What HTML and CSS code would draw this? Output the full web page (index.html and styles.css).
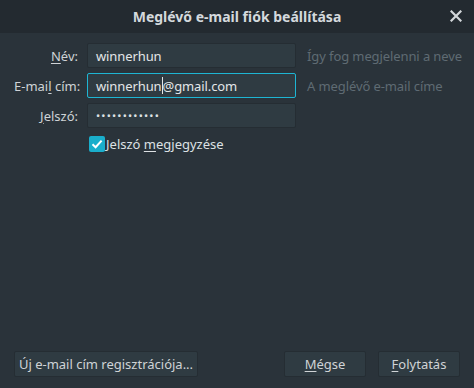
FILE: index.html
```html
<!DOCTYPE html>
<html lang="hu">
<head>
<meta charset="utf-8">
<link rel="stylesheet" href="styles.css">
</head>
<body>
<div class="window">
  <div class="titlebar">
    <div class="title">Meglévő e-mail fiók beállítása</div>
    <div class="close">
      <svg width="12" height="12" viewBox="0 0 12 12"><path d="M1.5 1.5 L10.5 10.5 M10.5 1.5 L1.5 10.5" stroke="#d3d7da" stroke-width="2.2" stroke-linecap="square"/></svg>
    </div>
  </div>
  <div class="content">
    <div class="form">
      <div class="label"><u>N</u>év:</div>
      <div class="field">winnerhun</div>
      <div class="hint">Így fog megjelenni a neve</div>

      <div class="label">E-mai<u>l</u> cím:</div>
      <div class="field focus">winnerhun<span class="caret"></span>@gmail.com</div>
      <div class="hint">A meglévő e-mail címe</div>

      <div class="label"><u>J</u>elszó:</div>
      <div class="field pwd">••••••••••••</div>
      <div class="hint"></div>

      <div></div>
      <div class="check-row">
        <span class="checkbox">
          <svg width="16" height="16" viewBox="0 0 16 16"><path d="M3.5 8.2 L6.6 11.2 L12.6 4.6" fill="none" stroke="#ffffff" stroke-width="2"/></svg>
        </span>
        <span class="check-label">Jelszó <u>m</u>egjegyzése</span>
      </div>
    </div>
    <div class="buttons">
      <div class="btn wide">Új e-mail cím regisztrációja...</div>
      <div class="spacer"></div>
      <div class="btn"><u>M</u>égse</div>
      <div class="btn"><u>F</u>olytatás</div>
    </div>
  </div>
</div>
</body>
</html>
```
FILE: styles.css
```css
html, body {
  margin: 0;
  padding: 0;
  background: #2a333a;
}
body {
  font-family: "Noto Sans", "Open Sans", sans-serif;
  font-size: 13px;
  color: #dde1e4;
}
.window {
  width: 474px;
  height: 388px;
  display: flex;
  flex-direction: column;
  background: #2a333a;
}
.titlebar {
  height: 33px;
  background: #232a30;
  display: flex;
  align-items: center;
  justify-content: center;
  position: relative;
}
.title {
  font-weight: bold;
  font-size: 14px;
  color: #d4d9dd;
}
.close {
  position: absolute;
  right: 12px;
  top: 10px;
  width: 12px;
  height: 12px;
  display: flex;
}
.content {
  flex: 1;
  display: flex;
  flex-direction: column;
  padding: 10px 14px 11px 14px;
}
.form {
  display: grid;
  grid-template-columns: 64px 209px auto;
  column-gap: 9px;
  row-gap: 5px;
  align-items: center;
}
.form .hint {
  margin-left: 2px;
  color: #5f6b73;
  white-space: nowrap;
  letter-spacing: -0.1px;
}
.label {
  text-align: right;
  color: #cfd3d6;
  white-space: nowrap;
}
.label u, .btn u, .check-label u {
  text-decoration-thickness: 1px;
  text-underline-offset: 2px;
}
.field {
  height: 25px;
  box-sizing: border-box;
  background: #2f3b42;
  border: 1px solid #252d33;
  border-radius: 2px;
  padding: 0 8px;
  display: flex;
  align-items: center;
  white-space: nowrap;
  color: #e3e6e8;
  letter-spacing: -0.1px;
}
.field.focus {
  border-color: #1eb5d3;
}
.field.pwd {
  font-size: 11px;
  letter-spacing: 1.2px;
  color: #dde1e4;
}
.caret {
  display: inline-block;
  width: 1px;
  height: 17px;
  background: #e3e6e8;
}
.check-row {
  grid-column: 2 / 4;
  display: flex;
  align-items: center;
  margin-top: 2px;
  margin-left: 2px;
}
.checkbox {
  width: 16px;
  height: 16px;
  background: #1aaecb;
  border-radius: 2px;
  display: flex;
}
.check-label {
  margin-left: 1px;
  color: #dde1e4;
}
.buttons {
  margin-top: auto;
  display: flex;
  gap: 12px;
}
.spacer {
  flex: 1;
}
.btn {
  height: 26px;
  box-sizing: border-box;
  background: #2f3b42;
  border: 1px solid #252d33;
  border-radius: 2px;
  display: flex;
  align-items: center;
  justify-content: center;
  color: #cfd3d6;
  width: 82px;
  white-space: nowrap;
}
.btn.wide {
  width: 184px;
}
```
